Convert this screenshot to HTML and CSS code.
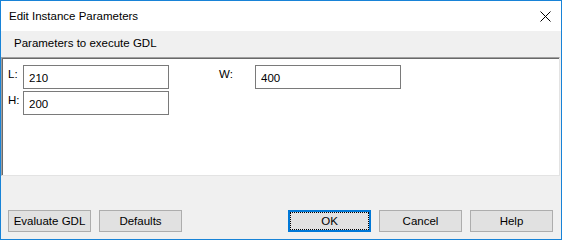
FILE: index.html
```html
<!DOCTYPE html>
<html lang="en">
<head>
    <meta charset="UTF-8">
    <title>Edit Instance Parameters</title>
    <link rel="stylesheet" href="styles.css">
</head>
<body>
    <div class="dialog">
        <!-- title bar -->
        <div class="titlebar">
            <span class="title">Edit Instance Parameters</span>
            <span class="close">
                <svg width="11" height="11" viewBox="0 0 11 11">
                    <path d="M0.5 0.5 L10.5 10.5 M10.5 0.5 L0.5 10.5" stroke="#000" stroke-width="1" fill="none"/>
                </svg>
            </span>
        </div>

        <div class="caption">Parameters to execute GDL</div>

        <!-- parameter list -->
        <div class="panel">
            <div class="params">
                <label class="param-label">L:</label>
                <input class="param-input" type="text" value="210">
                <label class="param-label wide">W:</label>
                <input class="param-input" type="text" value="400">
                <label class="param-label">H:</label>
                <input class="param-input" type="text" value="200">
            </div>
        </div>

        <!-- buttons -->
        <div class="footer">
            <div class="button-group">
                <button class="btn">Evaluate GDL</button>
                <button class="btn">Defaults</button>
            </div>
            <div class="button-group">
                <button class="btn default">OK</button>
                <button class="btn">Cancel</button>
                <button class="btn">Help</button>
            </div>
        </div>
    </div>
</body>
</html>
```

FILE: styles.css
```css
body {
    margin: 0;
    font-family: "Liberation Sans", Arial, sans-serif;
    font-size: 11.5px;
    color: #000;
    background-color: #fff;
}
.dialog {
    width: 562px;
    height: 240px;
    box-sizing: border-box;
    border: 1px solid #1883d7;
    background-color: #f0f0f0;
    display: flex;
    flex-direction: column;
}
.titlebar {
    height: 30px;
    background-color: #fff;
    display: flex;
    align-items: center;
    justify-content: space-between;
    padding: 0 10px 0 8px;
}
.title {
    padding-bottom: 1px;
}
.close {
    display: flex;
    width: 11px;
    height: 11px;
}
.caption {
    height: 26px;
    line-height: 24px;
    padding-left: 13px;
}
.panel {
    height: 119px;
    box-sizing: border-box;
    margin-right: 1px;
    background-color: #fff;
    border-top: 1px solid #a0a0a0;
    border-left: 1px solid #a0a0a0;
    border-right: 1px solid #e3e3e3;
    border-bottom: 1px solid #e3e3e3;
    box-shadow: inset 1px 1px 0 #696969;
    padding: 7px 0 0 6px;
}
.params {
    display: grid;
    grid-template-columns: 15px 146px 86px 146px;
    grid-auto-rows: 24px;
    row-gap: 2px;
}
.param-label {
    padding-top: 2px;
    line-height: 14px;
}
.param-label.wide {
    padding-left: 50px;
}
.param-input {
    box-sizing: border-box;
    width: 146px;
    height: 24px;
    margin: 0;
    border: 1px solid #7a7a7a;
    padding: 1px 5px 0;
    font-family: inherit;
    font-size: 11.5px;
    color: #000;
    outline: none;
}
.footer {
    flex: 1;
    display: flex;
    justify-content: space-between;
    align-items: flex-end;
    padding: 0 8px 7px 7px;
}
.button-group {
    display: flex;
    gap: 8px;
}
.btn {
    box-sizing: border-box;
    width: 83px;
    height: 22px;
    margin: 0;
    padding: 0;
    border: 1px solid #adadad;
    background-color: #e1e1e1;
    font-family: inherit;
    font-size: 11.5px;
    color: #000;
}
.btn.default {
    border: 2px solid #0078d7;
    outline: 1px dotted #000;
    outline-offset: -3px;
}
```
